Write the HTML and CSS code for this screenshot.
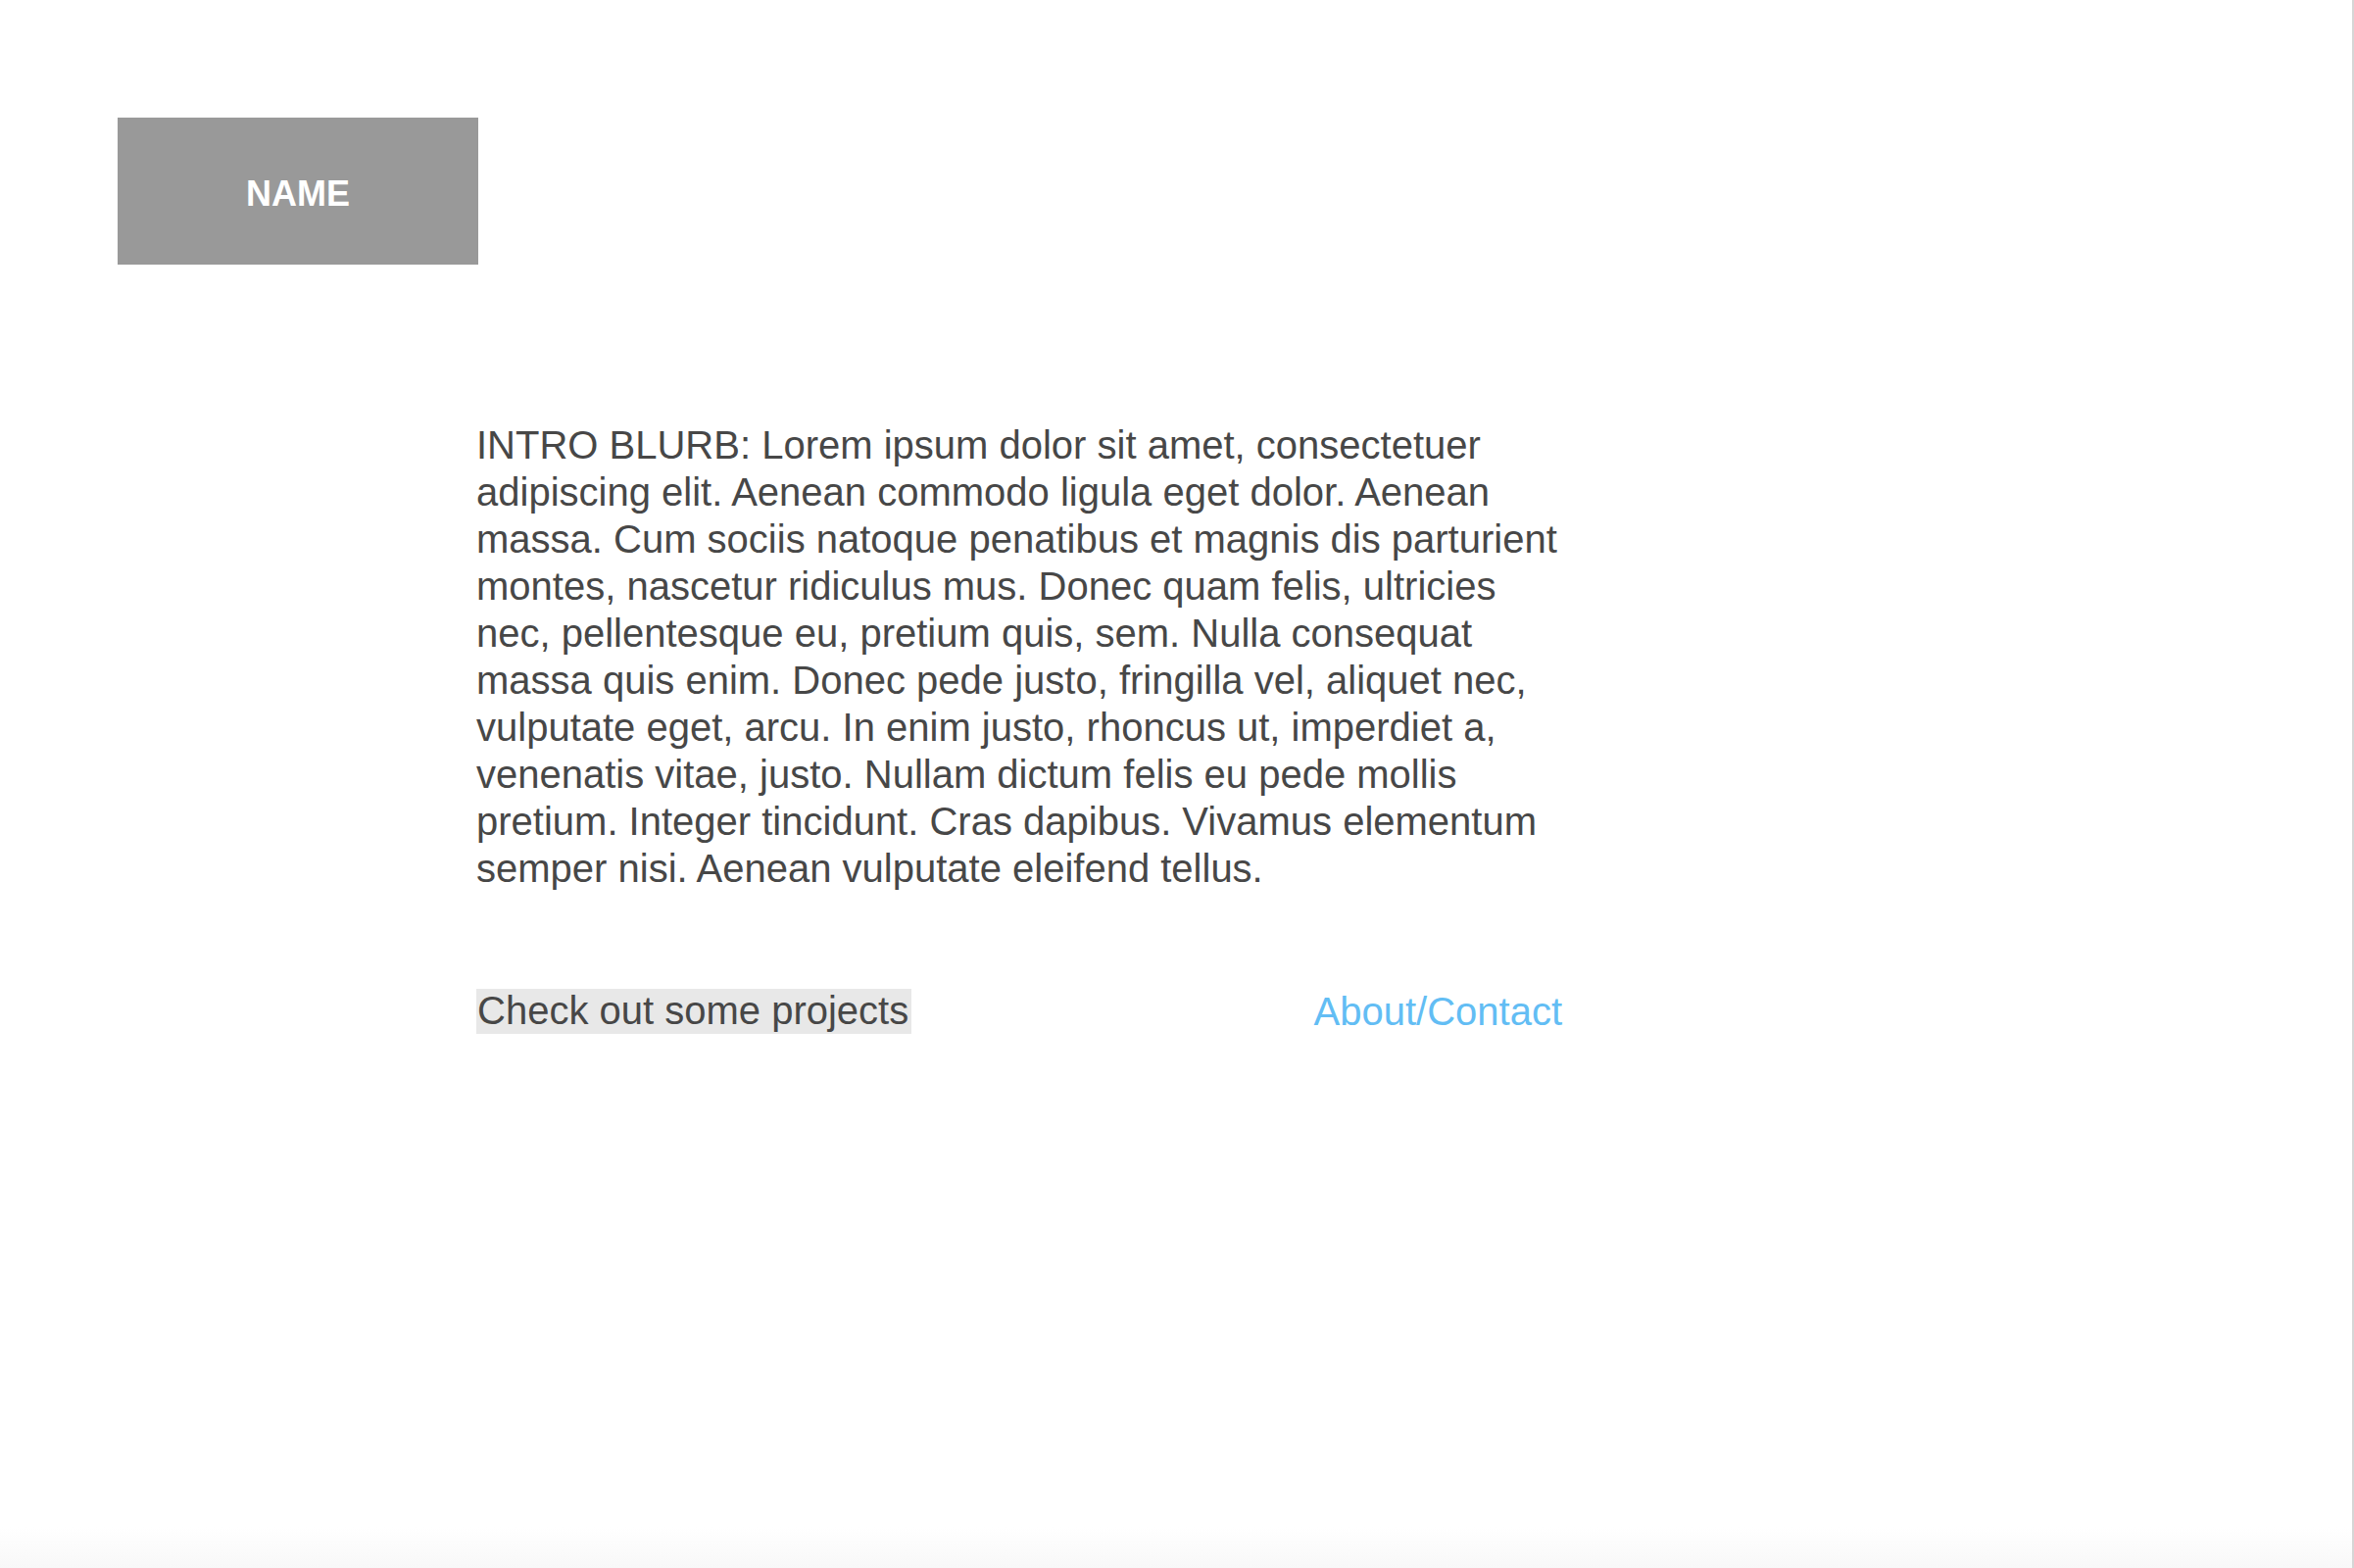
FILE: index.html
```html
<!DOCTYPE html>
<html lang="en">
<head>
<meta charset="utf-8">
<title>Name</title>
<link rel="stylesheet" href="styles.css">
</head>
<body>
<div class="page">
  <header class="header">
    <div class="name-box">NAME</div>
  </header>
  <main class="intro">
    <p class="blurb">INTRO BLURB: Lorem ipsum dolor sit amet, consectetuer adipiscing elit. Aenean commodo ligula eget dolor. Aenean massa. Cum sociis natoque penatibus et magnis dis parturient montes, nascetur ridiculus mus. Donec quam felis, ultricies nec, pellentesque eu, pretium quis, sem. Nulla consequat massa quis enim. Donec pede justo, fringilla vel, aliquet nec, vulputate eget, arcu. In enim justo, rhoncus ut, imperdiet a, venenatis vitae, justo. Nullam dictum felis eu pede mollis pretium. Integer tincidunt. Cras dapibus. Vivamus elementum semper nisi. Aenean vulputate eleifend tellus.</p>
    <nav class="links">
      <a class="projects" href="#">Check out some projects</a>
      <a class="about" href="#">About/Contact</a>
    </nav>
  </main>
</div>
</body>
</html>
```

FILE: styles.css
```css
html, body {
  margin: 0;
  padding: 0;
  height: 100%;
}
body {
  background: #ffffff;
  font-family: "Liberation Sans", Arial, Helvetica, sans-serif;
  overflow: hidden;
}
.page {
  box-sizing: border-box;
  height: 1600px;
  padding: 120px 0 0 120px;
  border-right: 2px solid #d6d6d6;
  background: linear-gradient(to bottom, #ffffff 0, #ffffff 1558px, #f8f8f8 1600px);
}
.header {
  display: flex;
}
.name-box {
  box-sizing: border-box;
  width: 368px;
  height: 150px;
  padding-top: 5px;
  background: #999999;
  color: #ffffff;
  font-weight: bold;
  font-size: 36px;
  display: flex;
  align-items: center;
  justify-content: center;
}
.intro {
  width: 1108px;
  margin: 160px 0 0 366px;
}
.blurb {
  margin: 0;
  font-size: 40px;
  line-height: 48px;
  color: #474747;
}
.links {
  display: flex;
  justify-content: space-between;
  align-items: center;
  margin-top: 99px;
}
.links a {
  font-size: 40px;
  line-height: 44px;
  text-decoration: none;
}
.projects {
  color: #474747;
  background: #e8e8e8;
  padding: 0 3px 0 1px;
  line-height: 42px;
  padding-bottom: 2px;
}
.about {
  color: #62bdf4;
}
```
